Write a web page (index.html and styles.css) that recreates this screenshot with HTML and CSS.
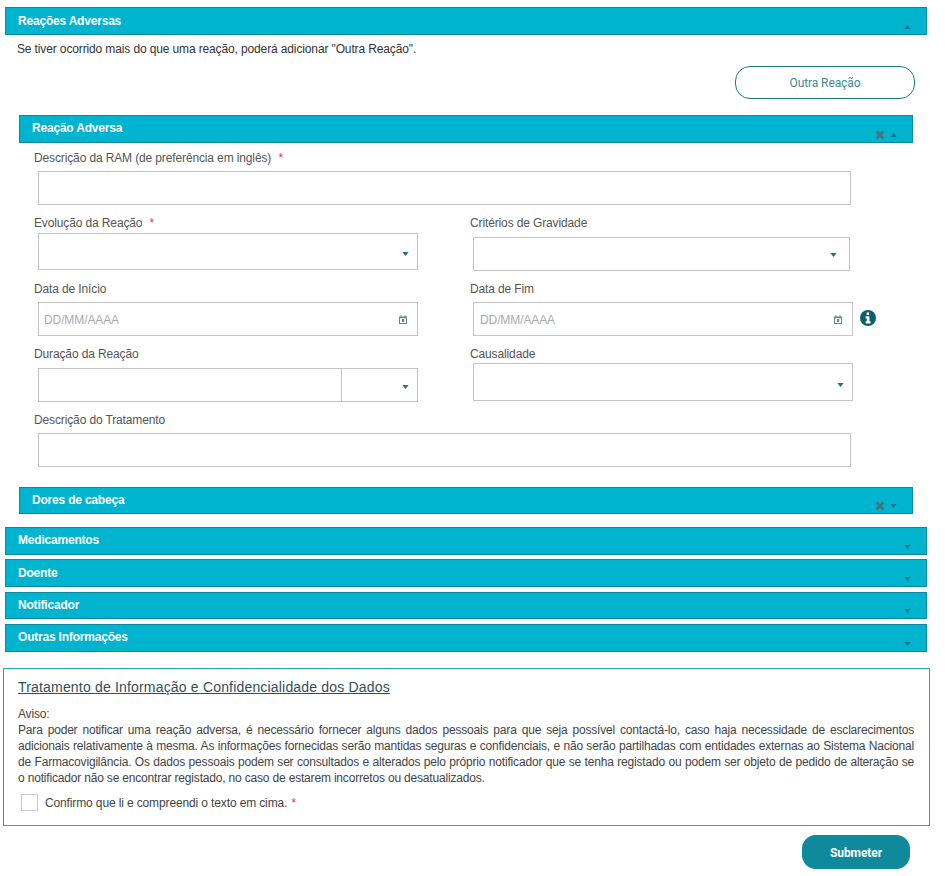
FILE: index.html
```html
<!DOCTYPE html>
<html lang="pt">
<head>
<meta charset="UTF-8">
<meta name="viewport" content="width=device-width, initial-scale=1.0">
<title>Notificação de Reação Adversa</title>
<link rel="stylesheet" href="styles.css">
</head>
<body>

<svg class="sprites" width="0" height="0">
    <symbol id="up" viewBox="0 0 8 5"><path d="M0 5 L4 0 L8 5 Z"/></symbol>
    <symbol id="down" viewBox="0 0 8 5"><path d="M0 0 L8 0 L4 5 Z"/></symbol>
    <symbol id="close" viewBox="0 0 10 10"><path d="M2.6 .6 L5 3 L7.4 .6 L9.4 2.6 L7 5 L9.4 7.4 L7.4 9.4 L5 7 L2.6 9.4 L.6 7.4 L3 5 L.6 2.6 Z"/></symbol>
    <symbol id="cal" viewBox="0 0 8 9"><path fill-rule="evenodd" d="M0 1.5 H1.5 V.3 H2.5 V1.5 H5.5 V.3 H6.5 V1.5 H8 V9 H0 Z M1 3.2 V8 H7 V3.2 Z M3 4 H5.2 V7 H3 Z"/></symbol>
</svg>

<main class="page">

    <section class="panel">
        <div class="bar bar-low">
            <span class="bar-title">Reações Adversas</span>
            <span class="bar-icons"><svg class="caret"><use href="#up"/></svg></span>
        </div>
        <p class="intro">Se tiver ocorrido mais do que uma reação, poderá adicionar "Outra Reação".</p>
        <div class="add-row"><button type="button" class="btn-outline">Outra Reação</button></div>

        <div class="sub">
            <div class="bar">
                <span class="bar-title">Reação Adversa</span>
                <span class="bar-icons">
                    <svg class="x-icon"><use href="#close"/></svg>
                    <svg class="caret"><use href="#up"/></svg>
                </span>
            </div>

            <div class="form">
                <label class="lbl">Descrição da RAM (de preferência em inglês) <i class="req">*</i></label>
                <input type="text" class="field field-ram">

                <div class="row row-evolucao">
                    <div class="col">
                        <label class="lbl">Evolução da Reação <i class="req">*</i></label>
                        <div class="field select sel-evolucao"><svg class="caret-sel"><use href="#down"/></svg></div>
                    </div>
                    <div class="col">
                        <label class="lbl">Critérios de Gravidade</label>
                        <div class="field select sel-criterios"><svg class="caret-sel"><use href="#down"/></svg></div>
                    </div>
                </div>

                <div class="row row-datas">
                    <div class="col">
                        <label class="lbl">Data de Início</label>
                        <div class="field date date-left">
                            <input type="text" placeholder="DD/MM/AAAA">
                            <svg class="cal"><use href="#cal"/></svg>
                        </div>
                    </div>
                    <div class="col">
                        <label class="lbl">Data de Fim</label>
                        <div class="date-wrap">
                            <div class="field date date-right">
                                <input type="text" placeholder="DD/MM/AAAA">
                                <svg class="cal"><use href="#cal"/></svg>
                            </div>
                            <svg class="info" viewBox="0 0 16 16">
                                <circle cx="8" cy="8" r="8" fill="#0b5f6b"/>
                                <path fill="#fff" d="M6.6 2.6 H9.2 V5 H6.6 Z M5.6 6.2 H9.4 V11.2 H10.6 V13.4 H5.6 V11.2 H6.8 V8.4 H5.6 Z"/>
                            </svg>
                        </div>
                    </div>
                </div>

                <div class="row row-duracao">
                    <div class="col">
                        <label class="lbl">Duração da Reação</label>
                        <div class="duration">
                            <input type="text" class="field dur-input">
                            <div class="field select dur-unit"><svg class="caret-sel"><use href="#down"/></svg></div>
                        </div>
                    </div>
                    <div class="col">
                        <label class="lbl">Causalidade</label>
                        <div class="field select sel-causa"><svg class="caret-sel"><use href="#down"/></svg></div>
                    </div>
                </div>

                <label class="lbl lbl-trat">Descrição do Tratamento</label>
                <input type="text" class="field field-trat">
            </div>

            <div class="bar bar-dores">
                <span class="bar-title">Dores de cabeça</span>
                <span class="bar-icons">
                    <svg class="x-icon"><use href="#close"/></svg>
                    <svg class="caret"><use href="#down"/></svg>
                </span>
            </div>
        </div>
    </section>

    <div class="bar bar-med">
        <span class="bar-title">Medicamentos</span>
        <span class="bar-icons"><svg class="caret"><use href="#down"/></svg></span>
    </div>
    <div class="bar bar-low bar-doente">
        <span class="bar-title">Doente</span>
        <span class="bar-icons"><svg class="caret"><use href="#down"/></svg></span>
    </div>
    <div class="bar bar-notif">
        <span class="bar-title">Notificador</span>
        <span class="bar-icons"><svg class="caret"><use href="#down"/></svg></span>
    </div>
    <div class="bar bar-outras">
        <span class="bar-title">Outras Informações</span>
        <span class="bar-icons"><svg class="caret"><use href="#down"/></svg></span>
    </div>

    <section class="notice">
        <h2>Tratamento de Informação e Confidencialidade dos Dados</h2>
        <p>Aviso:<br>Para poder notificar uma reação adversa, é necessário fornecer alguns dados pessoais para que seja possível contactá-lo, caso haja necessidade de esclarecimentos adicionais relativamente à mesma. As informações fornecidas serão mantidas seguras e confidenciais, e não serão partilhadas com entidades externas ao Sistema Nacional de Farmacovigilância. Os dados pessoais podem ser consultados e alterados pelo próprio notificador que se tenha registado ou podem ser objeto de pedido de alteração se o notificador não se encontrar registado, no caso de estarem incorretos ou desatualizados.</p>
        <label class="confirm">
            <span class="check"></span>
            <span>Confirmo que li e compreendi o texto em cima. <i class="req req-tight">*</i></span>
        </label>
    </section>

    <div class="submit-row"><button type="submit" class="btn-submit">Submeter</button></div>
</main>

</body>
</html>
```

FILE: styles.css
```css
body {
    font-family: "Liberation Sans", Arial, sans-serif;
    font-size: 12px;
    letter-spacing: -.13px;
    color: #444;
    margin: 0;
    padding: 0;
    background-color: #fff;
}

.sprites {
    display: block;
}

.page {
    padding: 7px 0 7px 3px;
    width: 927px;
}

.panel {
    margin-left: 2px;
    width: 922px;
}

/* barras azuis */
.bar {
    display: flex;
    justify-content: space-between;
    box-sizing: border-box;
    height: 28px;
    padding: 0 15px 0 12px;
    background-color: #00b4cf;
    border: 1px solid #0b8a9e;
    color: #fff;
}

.bar-title {
    font-weight: bold;
    letter-spacing: -.2px;
    line-height: 24px;
}

.bar-low .bar-title {
    line-height: 26px;
}

.bar-icons {
    display: flex;
    align-items: center;
    align-self: flex-end;
    gap: 5px;
    height: 12px;
    margin-bottom: 1px;
}

.caret {
    width: 7px;
    height: 4px;
    fill: #1f7488;
}

.x-icon {
    width: 10px;
    height: 10px;
    fill: #47747f;
}

.intro {
    margin: 6px 0 0 12px;
    line-height: 16px;
    color: #333;
}

.add-row {
    display: flex;
    justify-content: flex-end;
    margin: 9px 12px 16px 0;
}

.btn-outline {
    width: 180px;
    height: 33px;
    font-family: Roboto, sans-serif;
    font-size: 12px;
    letter-spacing: -.1px;
    color: #3d8a9a;
    background-color: #fff;
    border: 1px solid #18798c;
    border-radius: 15px;
}

.sub {
    margin-left: 14px;
    width: 894px;
}

.form {
    padding: 7px 0 0 15px;
}

.lbl {
    display: block;
    line-height: 16px;
    color: #555;
}

.req {
    font-style: normal;
    color: #d8374a;
    margin-left: 4px;
}

.req-tight {
    margin-left: 1px;
}

.field {
    display: block;
    box-sizing: border-box;
    height: 34px;
    margin: 5px 0 0 4px;
    background-color: #fff;
    border: 1px solid #c4c4c4;
}

.field-ram,
.field-trat {
    width: 813px;
    padding: 0;
}

.row {
    display: grid;
    grid-template-columns: 436px 1fr;
}

.row-evolucao {
    margin-top: 10px;
}

.row-datas {
    margin-top: 10px;
}

.row-duracao {
    margin-top: 10px;
}

.select {
    display: flex;
    align-items: center;
    justify-content: flex-end;
    padding-right: 8px;
}

.caret-sel {
    width: 7px;
    height: 4px;
    fill: #2f6d80;
}

.sel-evolucao {
    width: 380px;
    height: 37px;
    margin-top: 2px;
    padding-top: 5px;
}

.sel-criterios {
    width: 377px;
    margin-top: 6px;
    margin-left: 3px;
    padding-top: 2px;
    padding-right: 12px;
}

.date {
    display: flex;
    align-items: center;
    justify-content: space-between;
    padding: 0 10px 0 5px;
}

.date input {
    width: 200px;
    border: none;
    padding: 2px 0 0 0;
    outline: none;
    font-family: "Liberation Sans", Arial, sans-serif;
    font-size: 12px;
    letter-spacing: -.1px;
}

.date input::placeholder {
    color: #aaa;
}

.cal {
    width: 8px;
    height: 9px;
    fill: #5f8a8f;
}

.date-left {
    width: 380px;
    margin-top: 5px;
}

.date-wrap {
    display: flex;
    align-items: center;
    gap: 7px;
}

.date-wrap .date-right {
    width: 380px;
    margin: 5px 0 0 3px;
    padding-left: 6px;
}

.info {
    width: 16px;
    height: 16px;
    margin-top: 2px;
}

.duration {
    display: flex;
    margin: 6px 0 0 4px;
}

.duration .field {
    margin: 0;
}

.dur-input {
    width: 304px;
    padding: 0;
    border-right-width: 1px;
}

.dur-unit {
    width: 76px;
    border-left-width: 0;
    padding-top: 3px;
}

.sel-causa {
    width: 380px;
    height: 38px;
    margin: 1px 0 0 3px;
    padding-top: 6px;
}

.lbl-trat {
    margin-top: 10px;
}

.field-trat {
    margin-top: 5px;
}

.bar-dores {
    height: 27px;
    margin-top: 20px;
}

.bar-med {
    margin: 13px 0 0 2px;
    width: 922px;
}

.bar-doente {
    margin: 4px 0 0 2px;
    width: 922px;
}

.bar-notif {
    height: 27px;
    margin: 5px 0 0 2px;
    width: 922px;
}

.bar-outras {
    margin: 5px 0 0 2px;
    width: 922px;
}

/* aviso */
.notice {
    box-sizing: border-box;
    height: 158px;
    margin-top: 16px;
    padding: 10px 15px 0 14px;
    border: 1px solid #1ba9bd;
}

.notice h2 {
    margin: 0;
    font-size: 14px;
    font-weight: normal;
    letter-spacing: .18px;
    line-height: 16px;
    color: #2f4f58;
    text-decoration: underline;
}

.notice p {
    margin: 11px 0 0 0;
    line-height: 16px;
    letter-spacing: -.18px;
    text-align: justify;
    color: #444;
}

.confirm {
    display: flex;
    align-items: center;
    gap: 7px;
    margin: 8px 0 0 3px;
}

.check {
    box-sizing: border-box;
    width: 17px;
    height: 17px;
    border: 1px solid #ccc;
}

.submit-row {
    display: flex;
    justify-content: flex-end;
    margin: 9px 20px 0 0;
}

.btn-submit {
    width: 108px;
    height: 34px;
    padding-top: 2px;
    font-family: Roboto, sans-serif;
    font-size: 12px;
    font-weight: bold;
    letter-spacing: -.1px;
    color: #fff;
    background-color: #0e8a9c;
    border: none;
    border-radius: 14px;
}
```
